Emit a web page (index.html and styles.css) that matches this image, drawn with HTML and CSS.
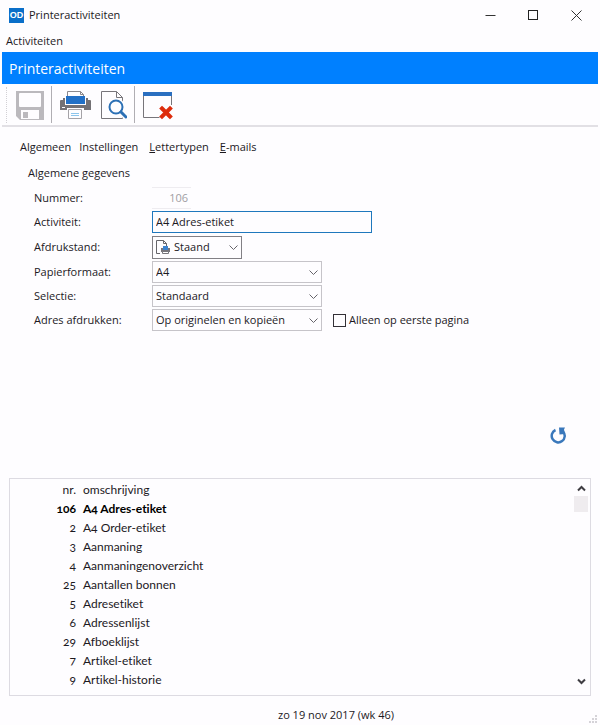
FILE: index.html
```html
<!DOCTYPE html>
<html lang="nl">

<head>
  <meta charset="UTF-8">
  <meta name="viewport" content="width=device-width, initial-scale=1.0">
  <title>Printeractiviteiten</title>
  <link rel="stylesheet" href="styles.css">
</head>

<body>
  <div class="window">
    <header class="titlebar">
      <span class="logo">OD</span>
      <span class="window-title">Printeractiviteiten</span>
      <button type="button" class="window-btn" aria-label="Minimaliseren">
        <svg width="11" height="11" viewBox="0 0 11 11"><path d="M0.5 5.5h10" stroke="#333" /></svg>
      </button>
      <button type="button" class="window-btn" aria-label="Maximaliseren">
        <svg width="11" height="11" viewBox="0 0 11 11"><rect x="0.5" y="0.5" width="9" height="9" fill="none" stroke="#222" /></svg>
      </button>
      <button type="button" class="window-btn" aria-label="Sluiten">
        <svg width="11" height="11" viewBox="0 0 11 11"><path d="M0.5 0.5l10 10M10.5 0.5l-10 10" stroke="#333" /></svg>
      </button>
    </header>

    <nav class="menubar">
      <button type="button">Activiteiten</button>
    </nav>

    <h1 class="banner">Printeractiviteiten</h1>

    <div class="toolbar">
      <button type="button" class="tool" aria-label="Opslaan" disabled>
        <svg width="29" height="30" viewBox="0 0 29 30">
          <path d="M1 1h28v29H5l-4-4z" fill="#bbb9bd" />
          <rect x="4" y="3" width="22" height="14" rx="1" fill="#fefdff" />
          <path d="M6 20h18v9H6z" fill="#fefdff" />
          <path d="M8 22h5v6H8z" fill="#bbb9bd" />
        </svg>
      </button>
      <span class="divider"></span>
      <button type="button" class="tool" aria-label="Afdrukken">
        <svg width="32" height="30" viewBox="0 0 32 30">
          <path d="M0 11q0-1 1-1h2V8h25v2h2q1 0 1 1v9H0z" fill="#737175" />
          <path d="M5 4h21v11H5z" fill="#fefdff" />
          <path d="M7.5 8V1.500h13l3 3V8" fill="#fefdff" stroke="#8b898d" />
          <path d="M20.500 1.500v3h3" fill="none" stroke="#8b898d" />
          <path d="M6 6h19v8H6z" fill="#2170c7" />
          <path d="M2 17h3v1H2z" fill="#fefdff" />
          <path d="M7 18h17v3H7z" fill="#fefdff" />
          <path d="M8.500 19.500h13v9h-13z" fill="#fefdff" stroke="#a5a3a8" />
          <path d="M11 23.500h8M11 25.500h8" stroke="#8cc5ec" />
        </svg>
      </button>
      <button type="button" class="tool" aria-label="Afdrukvoorbeeld">
        <svg width="28" height="30" viewBox="0 0 28 30">
          <path d="M2.500 1.500h15l6 6v21h-21z" fill="#fefdff" stroke="#77757a" />
          <path d="M17.500 1.500v6h6" fill="none" stroke="#77757a" />
          <circle cx="17" cy="17" r="9" fill="#fefdff" />
          <path d="M21 21l7 7" stroke="#fefdff" stroke-width="6" />
          <circle cx="17" cy="17" r="6.500" fill="#fefdff" stroke="#2c70b5" stroke-width="2" />
          <path d="M22 22l5 5" stroke="#2c70b5" stroke-width="3" stroke-linecap="round" />
        </svg>
      </button>
      <span class="divider"></span>
      <button type="button" class="tool" aria-label="Venster sluiten">
        <svg width="30" height="30" viewBox="0 0 30 30">
          <path d="M0.500 5v22.500h16M28.500 5v10" fill="none" stroke="#77757a" />
          <path d="M0 2h29v4H0z" fill="#2a6fc0" />
          <path d="M19 18.500l8 8M27 18.500l-8 8" stroke="#dd2c0c" stroke-width="4" stroke-linecap="square" />
        </svg>
      </button>
    </div>

    <form class="activity">
      <div class="tabs" role="tablist">
        <button type="button" role="tab" class="tab active" aria-selected="true">Al<u>g</u>emeen</button>
        <button type="button" role="tab" class="tab">Instellingen</button>
        <button type="button" role="tab" class="tab"><u>L</u>ettertypen</button>
        <button type="button" role="tab" class="tab"><u>E</u>-mails</button>
      </div>

      <h2 class="group-title">Algemene gegevens</h2>

      <div class="fields">
        <label for="nummer">Nummer:</label>
        <div class="field">
          <input type="text" id="nummer" class="number" value="106" disabled>
        </div>

        <label for="activiteit">Activiteit:</label>
        <div class="field">
          <input type="text" id="activiteit" class="name" value="A4 Adres-etiket">
        </div>

        <label for="afdrukstand">Afdrukstand:</label>
        <div class="field">
          <div class="select orientation">
            <select id="afdrukstand">
              <option>Staand</option>
              <option>Liggend</option>
            </select>
            <svg class="page-icon" width="16" height="16" viewBox="0 0 16 16">
              <path d="M5 14.500H1.500v-13h7l3 3V7" fill="none" stroke="#66656a" />
              <path d="M8.500 1.500v3h3" fill="none" stroke="#66656a" />
              <path d="M6 9h9v4H6z" fill="#77767c" />
              <path d="M8 7h5v4H8z" fill="#3c83cf" />
              <path d="M7.500 12.500h6v2h-6z" fill="#fff" stroke="#77767c" />
            </svg>
            <svg class="chevron" width="9" height="6" viewBox="0 0 9 6"><path d="M0.500 0.500l4 4 4-4" /></svg>
          </div>
        </div>

        <label for="papierformaat">Papierformaat:</label>
        <div class="field">
          <div class="select">
            <select id="papierformaat">
              <option>A4</option>
              <option>A5</option>
            </select>
            <svg class="chevron" width="9" height="6" viewBox="0 0 9 6"><path d="M0.500 0.500l4 4 4-4" /></svg>
          </div>
        </div>

        <label for="selectie">Selectie:</label>
        <div class="field">
          <div class="select">
            <select id="selectie">
              <option>Standaard</option>
            </select>
            <svg class="chevron" width="9" height="6" viewBox="0 0 9 6"><path d="M0.500 0.500l4 4 4-4" /></svg>
          </div>
        </div>

        <label for="adres">Adres afdrukken:</label>
        <div class="field">
          <div class="select">
            <select id="adres">
              <option>Op originelen en kopieën</option>
            </select>
            <svg class="chevron" width="9" height="6" viewBox="0 0 9 6"><path d="M0.500 0.500l4 4 4-4" /></svg>
          </div>
          <label class="check"><input type="checkbox"> Alleen op eerste pagina</label>
        </div>
      </div>

      <div class="actions">
        <button type="button" class="refresh" aria-label="Vernieuwen">
          <svg width="17" height="17" viewBox="0 0 17 17">
            <path d="M5.500 3A6.500 6.500 0 1 0 13 4.500" fill="none" stroke="#3a78bb" stroke-width="2.500" />
            <path d="M9 0.500h6l-1 2 1 4.500-5.500 0.500z" fill="#3a78bb" />
          </svg>
        </button>
      </div>
    </form>

    <div class="list">
      <table>
        <thead>
          <tr><th>nr.</th><th>omschrijving</th></tr>
        </thead>
        <tbody>
          <tr class="selected"><td>106</td><td>A4 Adres-etiket</td></tr>
          <tr><td>2</td><td>A4 Order-etiket</td></tr>
          <tr><td>3</td><td>Aanmaning</td></tr>
          <tr><td>4</td><td>Aanmaningenoverzicht</td></tr>
          <tr><td>25</td><td>Aantallen bonnen</td></tr>
          <tr><td>5</td><td>Adresetiket</td></tr>
          <tr><td>6</td><td>Adressenlijst</td></tr>
          <tr><td>29</td><td>Afboeklijst</td></tr>
          <tr><td>7</td><td>Artikel-etiket</td></tr>
          <tr><td>9</td><td>Artikel-historie</td></tr>
        </tbody>
      </table>
      <div class="scrollbar">
        <button type="button" aria-label="Omhoog">
          <svg width="9" height="7" viewBox="0 0 9 7"><path d="M1 5.500l3.500-3.500 3.500 3.500" /></svg>
        </button>
        <span class="thumb"></span>
        <button type="button" aria-label="Omlaag">
          <svg width="9" height="7" viewBox="0 0 9 7"><path d="M1 1.500l3.500 3.500 3.500-3.500" /></svg>
        </button>
      </div>
    </div>

    <footer class="statusbar">
      <span>zo 19 nov 2017 (wk 46)</span>
      <svg class="grip" width="8" height="8" viewBox="0 0 8 8">
        <path d="M6 0h2v2H6zM3 3h2v2H3zM6 3h2v2H6zM0 6h2v2H0zM3 6h2v2H3zM6 6h2v2H6z" fill="#d5d3d8" />
      </svg>
    </footer>
  </div>
</body>

</html>
```
FILE: styles.css
```css
* {
  box-sizing: border-box;
}

body {
  margin: 0;
  background-color: #fefdff;
  color: #1c191e;
  font-family: "Open Sans", "Noto Sans", sans-serif;
  font-size: 11px;
  line-height: 16px;
}

button,
input,
select {
  margin: 0;
  padding: 0;
  border: none;
  background: none;
  color: inherit;
  font: inherit;
}

svg {
  display: block;
}

.window {
  display: flex;
  flex-direction: column;
  min-height: 100vh;
  padding: 0 2px;
}

/* title bar and menu */
.titlebar {
  display: flex;
  align-items: center;
  height: 30px;
  padding-left: 7px;
}

.logo {
  width: 15px;
  height: 15px;
  margin-right: 5px;
  background-color: #0a6fc9;
  color: #ffffff;
  font-family: "Liberation Sans", sans-serif;
  font-size: 9px;
  font-weight: bold;
  line-height: 15px;
  text-align: center;
}

.window-title {
  flex: 1;
}

.window-btn {
  display: flex;
  align-items: center;
  justify-content: center;
  width: 43px;
  height: 30px;
}

.menubar {
  display: flex;
  align-items: center;
  height: 22px;
  padding-left: 4px;
}

.banner {
  height: 32px;
  margin: 0;
  padding-left: 7px;
  background-color: #0080ff;
  color: #ffffff;
  font-size: 14px;
  font-weight: normal;
  line-height: 34px;
}

/* toolbar */
.toolbar {
  display: flex;
  align-items: center;
  height: 43px;
  padding-left: 4px;
  border-bottom: 2px solid #e2e0e5;
}

.toolbar::before {
  content: "";
  height: 36px;
  margin-right: 8px;
  border-left: 1px dotted #d2d0d5;
}

.tool {
  margin-right: 7px;
}

.divider {
  width: 1px;
  height: 37px;
  margin-right: 8px;
  background-color: #b0aeb3;
}

/* form */
.activity {
  flex: 1;
  display: flex;
  flex-direction: column;
}

.tabs {
  display: flex;
  gap: 8px;
  padding: 12px 0 0 18px;
}

.tab {
  height: 16px;
  margin-right: 3px;
}

.tab.active {
  margin-right: 0;
}

.group-title {
  margin: 10px 0 5px 26px;
  font-size: 11px;
  font-weight: normal;
  line-height: 16px;
}

.fields {
  display: grid;
  grid-template-columns: 118px 1fr;
  grid-template-rows: 24px 24px 26px 24px 24px 24px;
  align-items: center;
  padding-left: 32px;
}

.field {
  display: flex;
  align-items: center;
}

.number {
  width: 39px;
  height: 22px;
  padding: 0 3px 2px 0;
  border-top: 1px solid #eeecf0;
  border-bottom: 1px solid #eeecf0;
  color: #a09ea3;
  text-align: right;
}

.name {
  flex: 0 1 220px;
  min-width: 0;
  height: 22px;
  padding: 0 0 2px 3px;
  border: 1px solid #1f78bd;
}

.select {
  position: relative;
  width: 170px;
}

.select select {
  display: block;
  width: 100%;
  height: 22px;
  padding-left: 3px;
  border: 1px solid #c6c4c9;
  appearance: none;
}

.select.orientation {
  width: 90px;
}

.select.orientation select {
  height: 23px;
  padding-left: 21px;
  border-color: #828085;
}

.page-icon {
  position: absolute;
  top: 3px;
  left: 3px;
}

.chevron {
  position: absolute;
  top: 9px;
  right: 4px;
  pointer-events: none;
}

.chevron path {
  fill: none;
  stroke: #66646a;
}

.check {
  display: flex;
  align-items: center;
  gap: 3px;
  margin-left: 11px;
}

.check input {
  width: 13px;
  height: 13px;
  border: 1px solid #333036;
  appearance: none;
}

.check input:checked {
  background-color: #1f78bd;
}

.actions {
  display: flex;
  flex: 1;
  align-items: flex-end;
  justify-content: flex-end;
  padding: 0 31px 34px 0;
}

/* list */
.list {
  display: flex;
  justify-content: space-between;
  margin: 0 7px;
  padding: 1px 2px 6px 0;
  border: 1px solid #dddbe2;
}

table {
  border-collapse: collapse;
  color: #1c191e;
  font-family: Lato, "Open Sans", sans-serif;
  font-size: 12px;
  font-variant-ligatures: none;
  font-variant-numeric: oldstyle-nums;
  line-height: 19px;
}

th,
td {
  padding: 0 0 0 7px;
  font-weight: normal;
  text-align: left;
}

th:first-child,
td:first-child {
  width: 66px;
  padding: 0;
  text-align: right;
}

.selected td {
  color: #000000;
  font-weight: bold;
}

.scrollbar {
  display: flex;
  flex-direction: column;
  width: 14px;
}

.scrollbar button {
  display: flex;
  align-items: center;
  justify-content: center;
  height: 16px;
}

.scrollbar button:last-child {
  margin-top: auto;
}

.scrollbar path {
  fill: none;
  stroke: #3f3d42;
  stroke-width: 2;
}

.thumb {
  height: 16px;
  background-color: #efecef;
}

/* status bar */
.statusbar {
  position: relative;
  height: 29px;
  padding: 11px 0 0 72px;
  text-align: center;
}

.grip {
  position: absolute;
  right: 1px;
  bottom: 2px;
}
```
